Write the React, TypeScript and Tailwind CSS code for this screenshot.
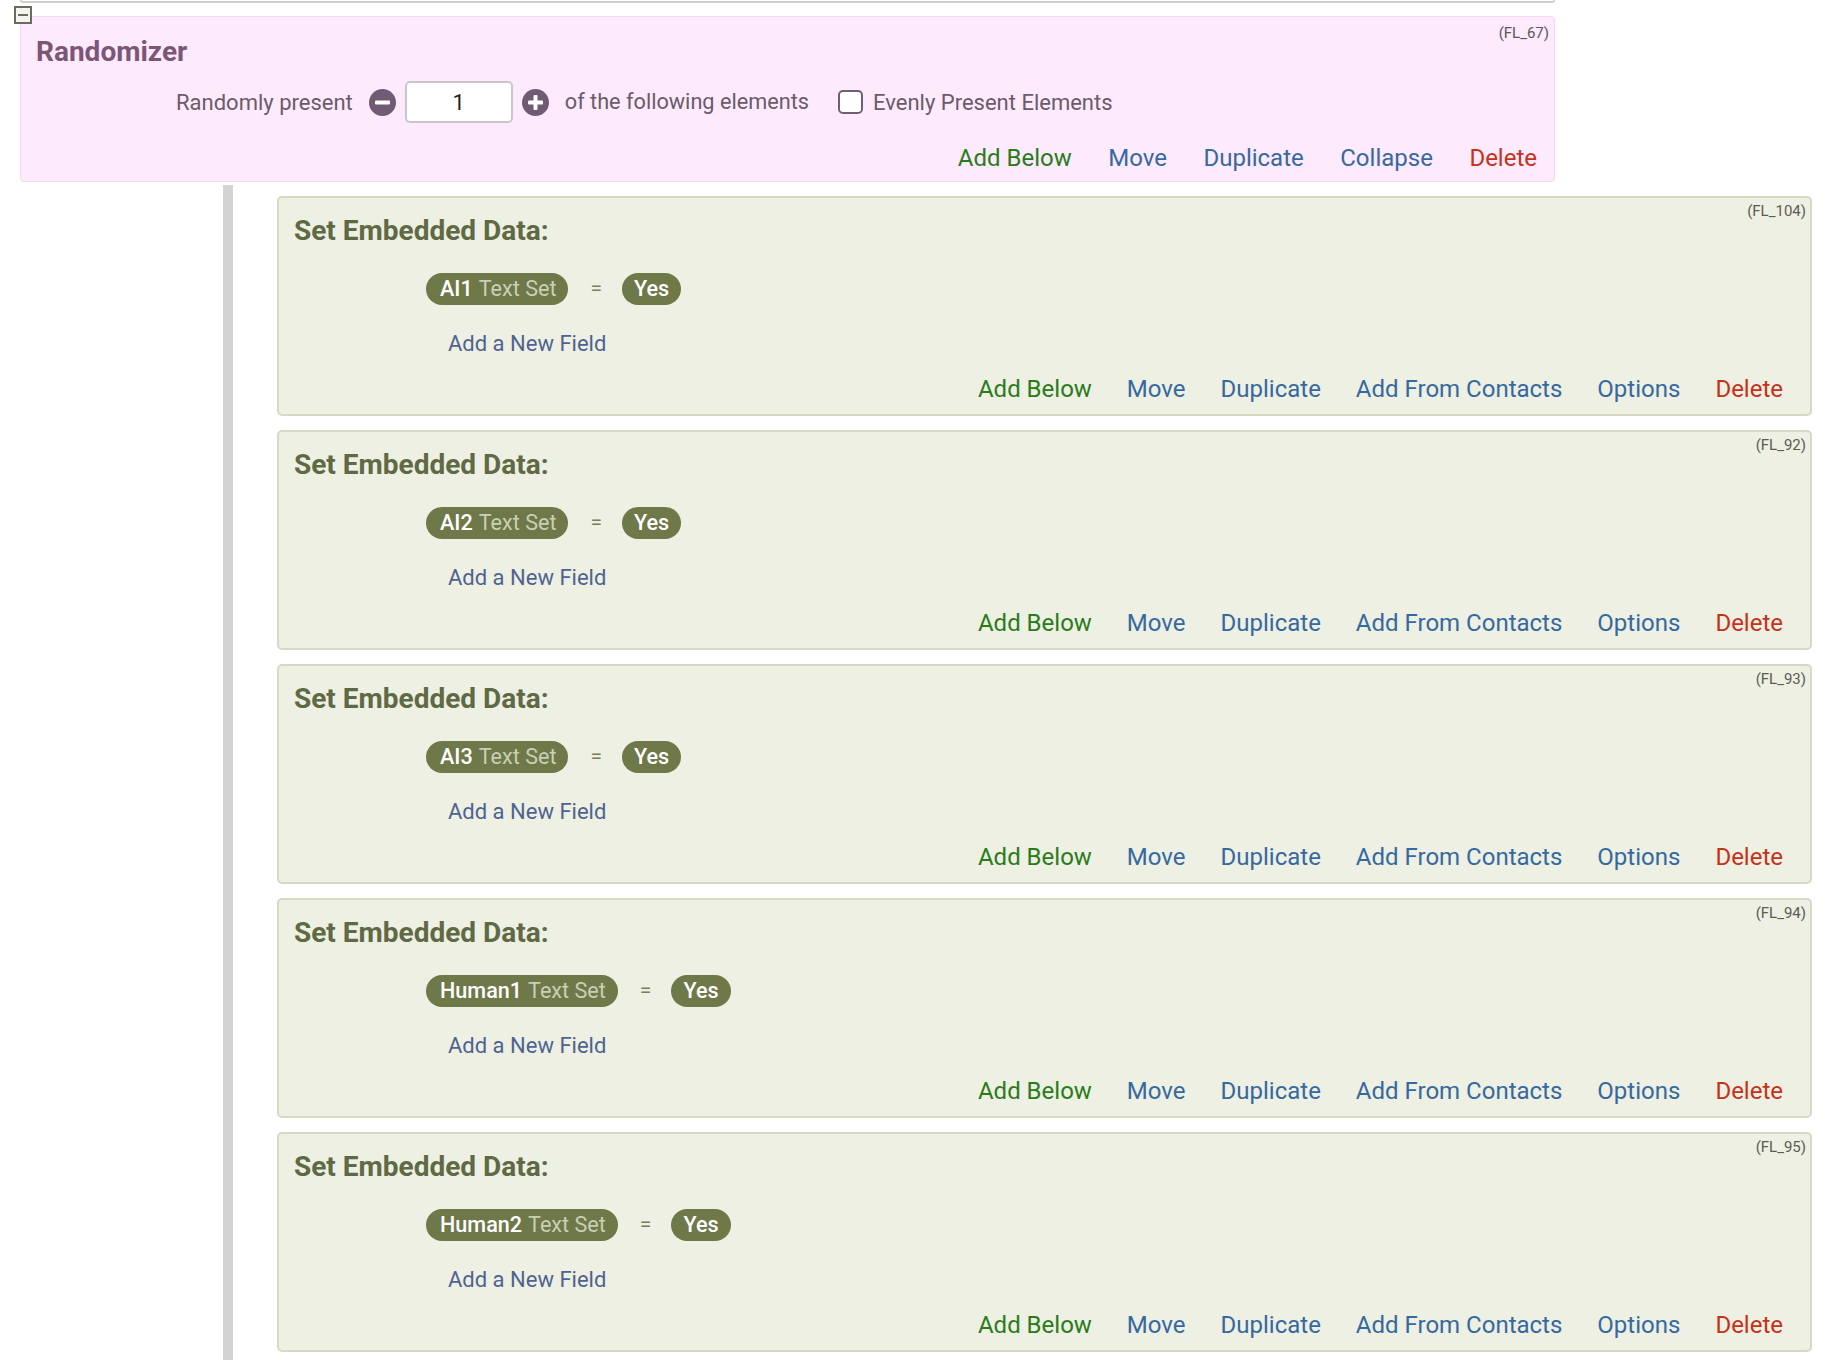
import React from 'react';

interface FieldRow {
  id: string;
  name: string;
}

const fields: FieldRow[] = [
  { id: 'FL_104', name: 'AI1' },
  { id: 'FL_92', name: 'AI2' },
  { id: 'FL_93', name: 'AI3' },
  { id: 'FL_94', name: 'Human1' },
  { id: 'FL_95', name: 'Human2' },
];

const CircleButton: React.FC<{ plus?: boolean }> = ({ plus }) => (
  <svg width="27" height="27" viewBox="0 0 27 27" className="shrink-0">
    <circle cx="13.5" cy="13.5" r="13.5" fill="#715a74" />
    <rect x="6" y="11.5" width="15" height="4" rx="1" fill="#fff" />
    {plus && <rect x="11.5" y="6" width="4" height="15" rx="1" fill="#fff" />}
  </svg>
);

const EmbeddedDataBlock: React.FC<{ field: FieldRow }> = ({ field }) => (
  <div className="relative box-border w-[1535px] h-[220px] bg-[#edf0e3] border-2 border-[#d6d9c4] rounded-[5px] flex flex-col">
    <span className="absolute right-[4px] top-[4px] text-[15px] leading-[18px] text-[#5c5c52]">({field.id})</span>
    <h2 className="mt-[17px] pl-[15px] text-[28px] leading-[32px] font-bold text-[#5f6a45]">Set Embedded Data:</h2>
    <div className="mt-[26px] pl-[147px] flex items-center h-[32px]">
      <span className="h-[32px] rounded-full bg-[#6e7848] pl-[14px] pr-[12px] flex items-center text-[21.6px] leading-none">
        <span className="font-medium text-white">{field.name}</span>
        <span className="ml-[6px] text-[#c9cfb6]">Text Set</span>
      </span>
      <span className="ml-[22px] text-[21px] text-[#767c5d]">=</span>
      <span className="ml-[20px] h-[32px] rounded-full bg-[#6e7848] px-[12px] flex items-center text-[21.6px] leading-none font-medium text-white">
        Yes
      </span>
    </div>
    <div className="mt-[25px] pl-[169px] text-[22px] leading-[28px] text-[#4f6391]">Add a New Field</div>
    <div className="mt-[16px] pr-[27px] flex justify-end gap-[35px] text-[24px] leading-[30px]">
      <span className="text-[#2b7b1b]">Add Below</span>
      <span className="text-[#36699f]">Move</span>
      <span className="text-[#36699f]">Duplicate</span>
      <span className="text-[#36699f]">Add From Contacts</span>
      <span className="text-[#36699f]">Options</span>
      <span className="text-[#c53218]">Delete</span>
    </div>
  </div>
);

export default function App() {
  return (
    <div className="relative w-[1838px] h-[1360px] overflow-hidden bg-white font-['Roboto',sans-serif]">
      <div className="ml-[20px] w-[1535px] h-[3px] border-x-2 border-b-2 border-[#cfcfcf] rounded-b-[4px]" />

      {/* collapse toggle */}
      <div className="absolute left-[14px] top-[6px] z-10 w-[18px] h-[18px] border-2 border-[#6a6c5c] bg-[#f4f4f0] flex items-center justify-center">
        <div className="w-[10px] h-[2px] bg-[#6a6c5c]" />
      </div>

      <section className="relative box-border mt-[13px] ml-[20px] w-[1535px] h-[166px] bg-[#fdeafc] border border-[#f2d9ef] rounded-[4px] flex flex-col">
        <span className="absolute right-[5px] top-[7px] text-[15px] leading-[18px] text-[#5c5560]">(FL_67)</span>
        <h1 className="mt-[19px] pl-[15px] text-[28px] leading-[32px] font-bold text-[#7b5677]">Randomizer</h1>
        <div className="mt-[13px] pl-[155px] h-[42px] flex items-center text-[22px] text-[#6b5b69]">
          <span>Randomly present</span>
          <span className="ml-[16px]"><CircleButton /></span>
          <div className="ml-[9px] w-[108px] h-[42px] box-border bg-white border-2 border-[#cbc6cc] rounded-[5px] flex items-center justify-center text-[#222]">
            1
          </div>
          <span className="ml-[9px]"><CircleButton plus /></span>
          <span className="ml-[16px] text-[21.7px]">of the following elements</span>
          <span className="ml-[29px] w-[25px] h-[24px] box-border border-2 border-[#6f6070] rounded-[5px] bg-white" />
          <span className="ml-[10px]">Evenly Present Elements</span>
        </div>
        <div className="mt-[20px] pr-[17px] flex justify-end gap-[36.5px] text-[24px] leading-[30px]">
          <span className="text-[#2b7b1b]">Add Below</span>
          <span className="text-[#36699f]">Move</span>
          <span className="text-[#36699f]">Duplicate</span>
          <span className="text-[#36699f]">Collapse</span>
          <span className="text-[#c53218]">Delete</span>
        </div>
      </section>

      <div className="flex">
        <div className="ml-[223px] mt-[3px] w-[10px] h-[1200px] bg-[#d3d3d3]" />
        <div className="ml-[44px] mt-[14px] flex flex-col gap-[14px]">
          {fields.map((f) => (
            <EmbeddedDataBlock key={f.id} field={f} />
          ))}
        </div>
      </div>
    </div>
  );
}
